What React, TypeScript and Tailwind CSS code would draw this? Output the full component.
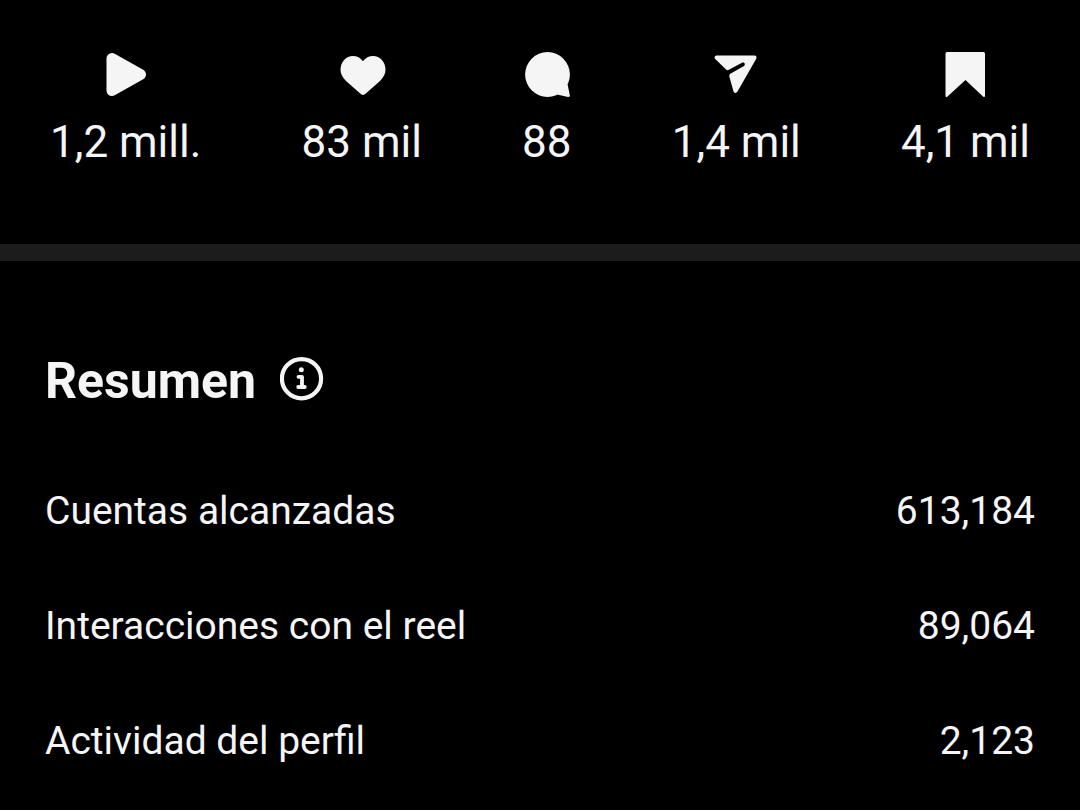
import React from "react";

const stats = [
  {
    label: "Reproducciones",
    value: "1,2 mill.",
    icon: <path d="M10 7.5V39.5L38.5 23.5Z" stroke="currentColor" strokeWidth="11" strokeLinejoin="round" />,
  },
  {
    label: "Me gusta",
    value: "83 mil",
    icon: <path d="M25 44C24 44 23.2 43.4 22.5 42.8L8 30C4.5 26.5 2.5 23 2.5 18.8C2.5 11 8 5 15 5C19 5 22.5 6.8 25 10.3C27.500 6.8 31 5 35 5C42 5 47.5 11 47.5 18.8C47.5 23 45.5 26.5 42 30L27.5 42.8C26.8 43.4 26 44 25 44Z" />,
  },
  {
    label: "Comentarios",
    value: "88",
    icon: (
      <>
        <circle cx="24.5" cy="23.5" r="22.4" />
        <path d="M44.5 33L46.8 44.3Q47.1 46.4 45 46L34 43.5Z" />
      </>
    ),
  },
  {
    label: "Compartidos",
    value: "1,4 mil",
    icon: <path d="M4.700 4.5H42.300C44.600 4.5 45 6.400 44.100 8L25.500 40.600C24.300 42.600 21.900 42.300 21.400 40L17.300 25.500Q16.900 23.700 18.300 22.700L31.600 15.200C34 13.700 32.600 10.500 30 11.700L16.300 18.900Q15.100 19.500 14 18.500L3.500 8.300C2 6.800 2.600 4.5 4.700 4.500Z" />,
  },
  {
    label: "Guardados",
    value: "4,1 mil",
    icon: <path d="M6 1H42.5Q44 1 44 2.5V44.5Q44 47 42 45.5L24.500 29L6.500 45.5Q4.5 47 4.5 44.5V2.5Q4.5 1 6 1Z" />,
  },
];

const rows = [
  ["Cuentas alcanzadas", "613,184"],
  ["Interacciones con el reel", "89,064"],
  ["Actividad del perfil", "2,123"],
];

export default function App() {
  return (
    <main className="min-h-screen bg-black font-['Roboto',sans-serif] text-[#f5f5f5]">
      <ul className="flex justify-between px-[50px] pt-[51px] pb-19">
        {stats.map((s) => (
          <li key={s.label} className="flex flex-col items-center">
            <svg role="img" aria-label={s.label} className="size-12 fill-current" viewBox="0 0 48 48">
              {s.icon}
            </svg>
            <span className="mt-[17px] text-[44px] leading-[52px]">{s.value}</span>
          </li>
        ))}
      </ul>
      <div className="h-[17px] bg-[#1c1c1c]" />
      <section className="px-[45px] pt-[88px]">
        <div className="flex items-center gap-6">
          <h1 className="text-[50px] leading-[64px] font-bold">Resumen</h1>
          <button aria-label="Información" className="pb-1">
            <svg className="size-11" viewBox="0 0 44 44" fill="none" stroke="currentColor" strokeLinecap="round" strokeLinejoin="round">
              <circle cx="21.5" cy="21.700" r="19.6" strokeWidth="4.2" />
              <circle cx="21.3" cy="12.8" r="2.5" fill="currentColor" stroke="none" />
              <path d="M18.500 19.8H22V30M18.2 30H24.800" strokeWidth="3.8" />
            </svg>
          </button>
        </div>
        <dl className="mt-[41px]">
          {rows.map(([label, value]) => (
            <div key={label} className="flex h-[115px] items-center justify-between text-[39px]">
              <dt>{label}</dt>
              <dd>{value}</dd>
            </div>
          ))}
        </dl>
      </section>
    </main>
  );
}
